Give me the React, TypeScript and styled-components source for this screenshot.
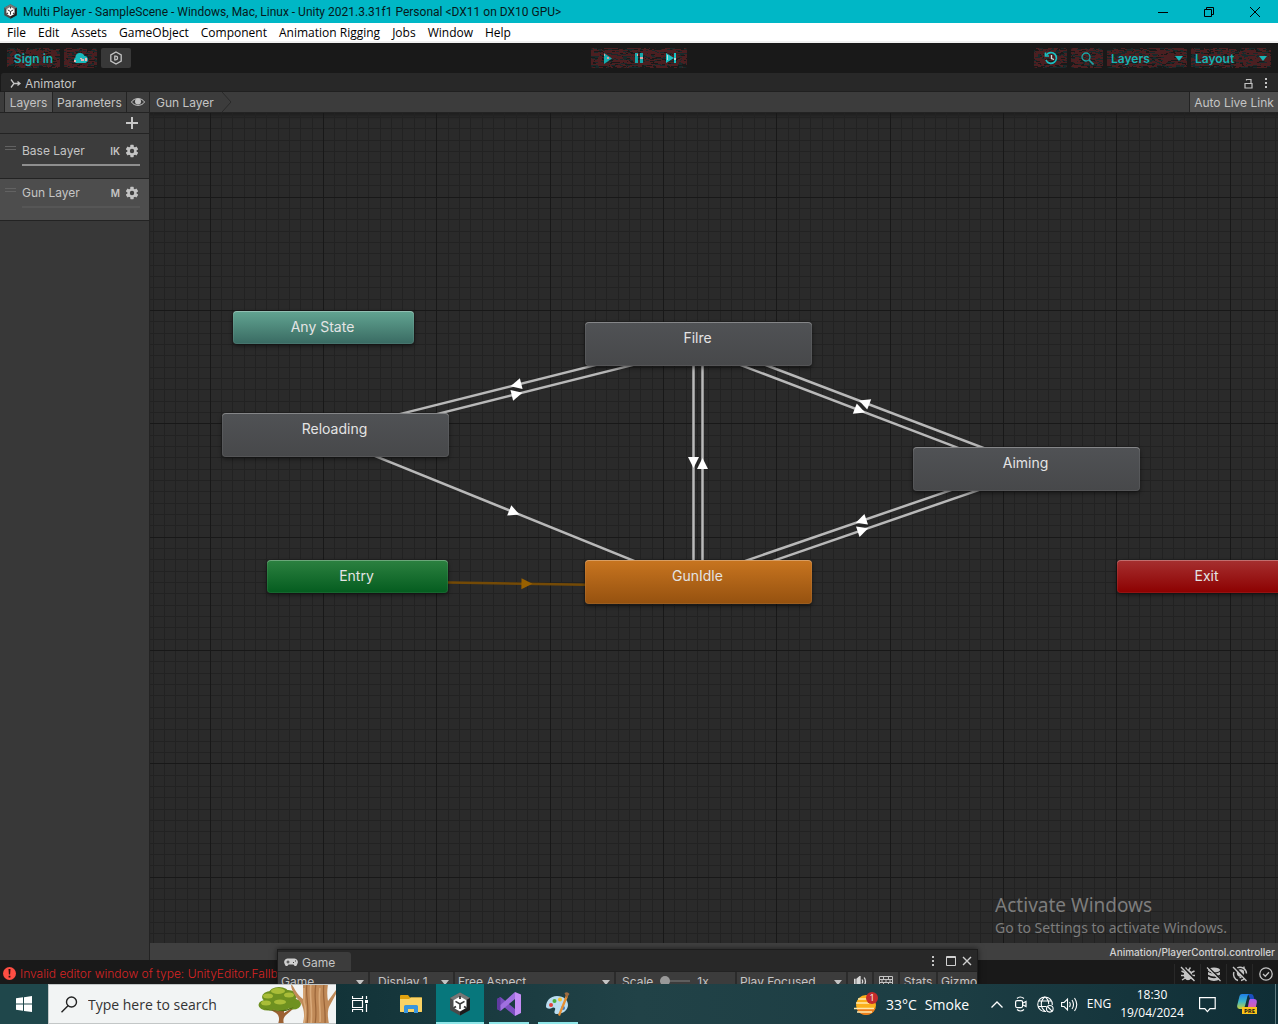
import React from "react";
import styled, { createGlobalStyle, css } from "styled-components";

const UI = `Inter, "Liberation Sans", sans-serif`;
const WIN = `"Open Sans", "Noto Sans", sans-serif`;

const Global = createGlobalStyle`
  * { box-sizing: border-box; }
  body { margin: 0; background: #fff; font-family: ${UI}; font-size: 12px; color: #c4c4c4; }
  button, select, input { font: inherit; color: inherit; margin: 0; }
  button { padding: 0; border: 0; background: none; white-space: nowrap; }
  svg { display: block; flex: none; }
`;

const Desktop = styled.div`
  display: flex;
  flex-direction: column;
  height: calc(100vh - 2px);
  min-height: 600px;
  overflow: hidden;
`;

/* ---------- window chrome ---------- */

const TitleBar = styled.header`
  display: flex;
  align-items: center;
  height: 23px;
  flex: none;
  padding-left: 3px;
  gap: 5px;
  background: #00b7c6;
  color: #06191b;
  font-family: Roboto, ${WIN};
`;

const TitleText = styled.h1`
  flex: 1;
  margin: 0;
  font-size: 12px;
  font-weight: 400;
  white-space: nowrap;
`;

const CaptionButton = styled.button`
  display: grid;
  place-items: center;
  width: 46px;
  height: 20px;
  align-self: flex-start;
`;

const MenuBar = styled.nav`
  display: flex;
  gap: 12px;
  height: 20px;
  flex: none;
  padding: 0 7px;
  background: #fff;
  border-bottom: 2px solid #f0f0f0;
  color: #000;
  font-family: ${WIN};
  line-height: 20px;
`;

const MainToolbar = styled.div`
  display: grid;
  grid-template-columns: 1fr auto 1fr;
  align-items: center;
  height: 30px;
  flex: none;
  padding: 0 7px;
  background: #191919;
`;

const ToolGroup = styled.div<{ $end?: boolean; $tight?: boolean }>`
  display: flex;
  gap: ${(p) => (p.$tight ? 0 : 4)}px;
  justify-content: ${(p) => (p.$end ? "flex-end" : "flex-start")};
`;

const ToolSlot = styled.div<{ $w: number }>`
  position: relative;
  width: ${(p) => p.$w}px;
  height: 20px;
  overflow: hidden;
  border-radius: 2px;
  color: #16b2b4;
`;

const SlotGrain = styled.svg`
  position: absolute;
  inset: 0;
`;

const ToolButton = styled.button`
  position: relative;
  display: grid;
  place-items: center;
  width: 100%;
  height: 100%;
  font-weight: 600;
`;

const PlainToolButton = styled(ToolButton)`
  width: 30px;
  height: 20px;
  border-radius: 2px;
  background: #383838;
`;

const selectReset = css`
  appearance: none;
  border: 0;
  background: none;
  outline: 0;
`;

const ToolSelect = styled.select`
  ${selectReset}
  position: relative;
  width: 100%;
  height: 100%;
  padding: 0 4px;
  font-weight: 600;
`;

const Caret = styled.svg`
  position: absolute;
  right: 4px;
  top: 8px;
  pointer-events: none;
`;

/* ---------- animator panel ---------- */

const Editor = styled.div`
  position: relative;
  display: flex;
  flex-direction: column;
  flex: 1;
  min-height: 0;
  overflow: hidden;
  background: #191919;
`;

const TabStrip = styled.div`
  display: flex;
  align-items: center;
  justify-content: space-between;
  height: 19px;
  flex: none;
  padding: 2px 10px 0 9px;
  background: #282828;
  border-bottom: 1px solid #202020;
  border-left: 1px solid #191919;
  border-top-left-radius: 3px;
`;

const Inline = styled.div<{ $gap: number }>`
  display: flex;
  align-items: center;
  gap: ${(p) => p.$gap}px;
`;

const PanelBar = styled.div`
  display: flex;
  height: 21px;
  flex: none;
  padding-left: 4px;
  background: #3c3c3c;
  border-bottom: 1px solid #232323;
`;

const BarButton = styled.button<{ $on?: boolean; $w: number }>`
  display: grid;
  place-items: center;
  width: ${(p) => p.$w}px;
  border-left: 1px solid #232323;
  background: ${(p) => (p.$on ? "#505050" : "transparent")};
`;

const Crumb = styled.button`
  flex: 1;
  display: flex;
  align-items: center;
  gap: 8px;
  padding-left: 6px;
  border-left: 1px solid #232323;
`;

const Body = styled.div`
  display: flex;
  flex: 1;
  min-height: 0;
`;

const SideBar = styled.aside`
  width: 150px;
  flex: none;
  background: #383838;
  border-right: 1px solid #232323;
`;

const AddRow = styled.div`
  display: flex;
  justify-content: flex-end;
  align-items: center;
  height: 21px;
  padding-right: 11px;
  background: #3c3c3c;
  border-bottom: 1px solid #232323;
`;

const LayerList = styled.ul`
  list-style: none;
  margin: 0;
  padding: 0;
`;

const LayerItem = styled.li<{ $on?: boolean }>`
  display: grid;
  grid-template-columns: 18px 1fr auto 15px;
  align-items: center;
  align-content: start;
  column-gap: 5px;
  height: ${(p) => (p.$on ? 42 : 45)}px;
  padding: ${(p) => (p.$on ? 6 : 9)}px 9px 0 4px;
  background: ${(p) => (p.$on ? "#4d4d4d" : "#3c3c3c")};
  border-bottom: 1px solid #232323;
  line-height: 16px;
`;

const Grip = styled.span`
  width: 11px;
  height: 4px;
  margin: 0 0 7px 1px;
  border: solid #626262;
  border-width: 1px 0;
`;

const Flag = styled.span`
  font-size: 10px;
  font-weight: 600;
`;

const LayerName = styled.span`
  margin-left: -5px;
`;

const Weight = styled.span<{ $full?: boolean }>`
  grid-column: 1 / -1;
  height: 2px;
  margin: 5px 0 0 18px;
  background: ${(p) => (p.$full ? "#8f8f8f" : "#565656")};
`;

const Main = styled.main`
  flex: 1;
  min-width: 0;
  display: flex;
  flex-direction: column;
`;

const Canvas = styled.div`
  position: relative;
  flex: 1;
  overflow: hidden;
  background: #2a2a2a;
  box-shadow: inset 0 5px 4px -3px #1c1c1c;
`;

const Wires = styled.svg`
  position: absolute;
  inset: 0;
  width: 100%;
  height: 100%;
`;

const StateNode = styled.button<{ $x: number; $y: number; $w: number; $h: number; $from: string; $to: string }>`
  position: absolute;
  left: ${(p) => p.$x}px;
  top: ${(p) => p.$y}px;
  width: ${(p) => p.$w}px;
  height: ${(p) => p.$h}px;
  padding: 0 2px ${(p) => (p.$h > 40 ? 13 : 2)}px 0;
  border-radius: 4px;
  background: linear-gradient(${(p) => p.$from}, ${(p) => p.$to});
  box-shadow: inset 0 1px 0 rgba(255, 255, 255, 0.25), inset 0 0 0 1px rgba(255, 255, 255, 0.07), 0 2px 4px rgba(0, 0, 0, 0.5);
  color: #e4e4e4;
  font-size: 14px;
`;

const Watermark = styled.div`
  position: absolute;
  right: 51px;
  bottom: 5px;
  color: #7d7d7d;
  font-family: "Noto Sans", ${WIN};
  font-size: 14px;
  line-height: 20px;
  white-space: nowrap;
  pointer-events: none;
`;

const WatermarkTitle = styled.div`
  font-size: 19px;
  line-height: 26px;
`;

const PathBar = styled.footer`
  height: 17px;
  flex: none;
  padding-right: 3px;
  background: #404040;
  color: #d2d2d2;
  font-size: 10px;
  font-weight: 500;
  line-height: 18px;
  text-align: right;
`;

const StatusBar = styled.div`
  display: flex;
  align-items: center;
  justify-content: space-between;
  height: 24px;
  flex: none;
  padding: 3px 0 0 3px;
  background: #191919;
`;

const ErrorLine = styled.button`
  display: flex;
  align-items: center;
  gap: 4px;
  color: #d62424;
  font-weight: 300;
`;

const StatusIcon = styled.button`
  display: grid;
  place-items: center;
  width: 26px;
  height: 20px;
  border-left: 1px solid #282828;
`;

/* ---------- floating game window ---------- */

const GameWindow = styled.section`
  position: absolute;
  left: 277px;
  bottom: 0;
  width: 701px;
  height: 35px;
  overflow: hidden;
  background: #282828;
  border: solid #1c1c1c;
  border-width: 1px 1px 0;
  box-shadow: 0 0 6px rgba(0, 0, 0, 0.6);
`;

const GameTabs = styled.div`
  display: flex;
  justify-content: space-between;
  height: 21px;
  padding-right: 5px;
`;

const GameTab = styled.div`
  display: flex;
  align-items: center;
  gap: 4px;
  width: 73px;
  margin-top: 2px;
  padding: 2px 0 0 6px;
  background: #3c3c3c;
  border-top-right-radius: 3px;
`;

const GameBar = styled.div`
  display: flex;
  height: 19px;
  background: #3c3c3c;
  border-top: 1px solid #232323;
`;

const GameCell = styled.div<{ $w: number }>`
  position: relative;
  display: flex;
  align-items: center;
  width: ${(p) => p.$w}px;
  flex: none;
  border-right: 2px solid #2b2b2b;
`;

const GameSelect = styled.select<{ $inset?: boolean }>`
  ${selectReset}
  width: 100%;
  height: 18px;
  padding: 0 0 0 ${(p) => (p.$inset ? 8 : 3)}px;
`;

const ScaleLabel = styled.label`
  display: flex;
  align-items: center;
  gap: 7px;
  padding-left: 6px;
`;

const ScaleRange = styled.input`
  appearance: none;
  width: 30px;
  height: 2px;
  background: #5e5e5e;
  &::-webkit-slider-thumb {
    appearance: none;
    width: 10px;
    height: 10px;
    border-radius: 50%;
    background: #999;
  }
`;

const GameButton = styled.button`
  display: grid;
  place-items: center;
  width: 100%;
  height: 18px;
`;

/* ---------- taskbar ---------- */

const TaskBar = styled.footer`
  display: flex;
  height: 40px;
  flex: none;
  background: linear-gradient(90deg, #123338 26%, #214247 50%, #1c3d43 75%, #0f2e36 100%);
  color: #fff;
  font-family: ${WIN};
`;

const StartButton = styled.button`
  display: grid;
  place-items: center;
  width: 48px;
  background: #1f474b;
`;

const SearchBox = styled.label`
  position: relative;
  display: flex;
  align-items: center;
  gap: 10px;
  width: 288px;
  padding-left: 12px;
  overflow: hidden;
  background: #f2f4f4;
  border: solid #c3c7c7;
  border-width: 1px 0 1px 1px;
  color: #333;
`;

const SearchInput = styled.input`
  width: 150px;
  padding: 0;
  border: 0;
  outline: 0;
  background: none;
  font-size: 14px;
  &::placeholder { color: #333; opacity: 1; }
`;

const SearchArt = styled.svg`
  position: absolute;
  right: 0;
  top: -1px;
`;

const TaskIcon = styled.button<{ $active?: boolean; $open?: boolean }>`
  display: grid;
  place-items: center;
  width: 48px;
  background: ${(p) => (p.$active ? "#07777c" : "transparent")};
  background-image: ${(p) => (p.$active || p.$open ? "linear-gradient(#8fe6e8, #8fe6e8)" : "none")};
  background-size: ${(p) => (p.$active ? 48 : 40)}px 2px;
  background-position: center bottom;
  background-repeat: no-repeat;
`;

const TaskList = styled.div`
  display: flex;
  gap: 1px;
  margin-left: 3px;
`;

const Tray = styled.div`
  display: flex;
  align-items: center;
  margin-left: auto;
  padding-right: 2px;
`;

const TrayItem = styled.button<{ $w: number }>`
  display: grid;
  place-items: center;
  width: ${(p) => p.$w}px;
  height: 40px;
  font-size: 12px;
  line-height: 18px;
`;

const Weather = styled.button`
  display: flex;
  align-items: center;
  gap: 8px;
  width: 131px;
  font-size: 14px;
`;

const Divider = styled.span`
  width: 1px;
  height: 40px;
  margin-left: 8px;
  background: #5f7b80;
`;

/* ---------- grain behind toolbar buttons ---------- */

function Grain({ w, seed }: { w: number; seed: number }) {
  let s = seed * 7919 + 17;
  const rnd = () => {
    s = (s * 1103515245 + 12345) % 2147483648;
    return s / 2147483648;
  };
  let red = "";
  let teal = "";
  for (let y = 0; y < 20; y++) {
    let x = 0;
    while (x < w) {
      const run = Math.min(1 + Math.floor(rnd() * 4), w - x);
      const k = rnd();
      const chance = y < 2 || y > 17 ? 0.4 : 0.66;
      if (k < chance) red += `M${x} ${y}h${run}v1h-${run}z`;
      else if (k > 0.8) teal += `M${x} ${y}h${run}v1h-${run}z`;
      x += run;
    }
  }
  return (
    <SlotGrain width={w} height={20} shapeRendering="crispEdges" aria-hidden>
      <path d={red} fill="#4b1f21" />
      <path d={teal} fill="#182a2b" />
    </SlotGrain>
  );
}

function Slot({ w, seed, children }: { w: number; seed: number; children: React.ReactNode }) {
  return (
    <ToolSlot $w={w}>
      <Grain w={w} seed={seed} />
      {children}
    </ToolSlot>
  );
}

const Down = ({ fill = "#c4c4c4" }: { fill?: string }) => (
  <Caret width="8" height="5" viewBox="0 0 8 5">
    <path d="M0 0h8L4 5z" fill={fill} />
  </Caret>
);

/* ---------- icons ---------- */

const UnityIcon = ({ size }: { size: number }) => (
  <svg width={size} height={size} viewBox="0 0 24 24">
    <path d="M12 0.5 22 6v12l-10 5.500L2 18V6z" fill="#4a4a4a" />
    <path d="M12 0.5 22 6l-10 6L2 6z" fill="#777" />
    <path d="M22 6v12l-10 5.500V12z" fill="#1c1c1c" />
    <path d="M12 4.500 18.500 8.200v7.600L12 19.500l-6.500-3.700V8.200z" fill="#fff" />
    <path d="M12 12v5M12 12 7.500 9.400M12 12l4.500-2.600" stroke="#3a3a3a" strokeWidth="1.600" />
    <path d="M12 4v3M5.500 16l2.500-1.500M18.500 16L16 14.500" stroke="#3a3a3a" strokeWidth="1.800" />
  </svg>
);

const Gear = () => (
  <svg width="14" height="14" viewBox="0 0 14 14">
    <g fill="#c4c4c4">
      <circle cx="7" cy="7" r="4.600" />
      {[0, 60, 120].map((a) => (
        <rect key={a} x="5.300" y="0.800" width="3.400" height="12.400" rx="0.600" transform={`rotate(${a} 7 7)`} />
      ))}
    </g>
    <circle cx="7" cy="7" r="2.200" fill="#404040" />
  </svg>
);

const Dots = () => (
  <svg width="4" height="12" viewBox="0 0 4 12" fill="#c4c4c4">
    <path d="M1 1h2v2H1zM1 5h2v2H1zM1 9h2v2H1z" />
  </svg>
);

/* ---------- state graph ---------- */

type NodeDef = { id: string; x: number; y: number; w: number; h: number; from: string; to: string };

const GREY = { from: "#505255", to: "#47484a" };
const nodes: NodeDef[] = [
  { id: "Any State", x: 83, y: 198, w: 181, h: 33, from: "#62a592", to: "#396a62" },
  { id: "Filre", x: 435, y: 209, w: 227, h: 44, ...GREY },
  { id: "Reloading", x: 72, y: 300, w: 227, h: 44, ...GREY },
  { id: "Aiming", x: 763, y: 334, w: 227, h: 44, ...GREY },
  { id: "Entry", x: 117, y: 447, w: 181, h: 33, from: "#2c8140", to: "#045c1f" },
  { id: "GunIdle", x: 435, y: 447, w: 227, h: 44, from: "#c87520", to: "#95510f" },
  { id: "Exit", x: 967, y: 447, w: 181, h: 33, from: "#a63030", to: "#8c0000" },
];

const links: [string, string][] = [
  ["Reloading", "Filre"],
  ["Filre", "Reloading"],
  ["Filre", "GunIdle"],
  ["GunIdle", "Filre"],
  ["Filre", "Aiming"],
  ["Aiming", "Filre"],
  ["Aiming", "GunIdle"],
  ["GunIdle", "Aiming"],
  ["Reloading", "GunIdle"],
  ["Entry", "GunIdle"],
];

const centre = (id: string) => {
  const n = nodes.find((v) => v.id === id)!;
  return [Math.floor(n.x + n.w / 2), n.y + n.h / 2];
};

function Link({ a, b }: { a: string; b: string }) {
  const [x1, y1] = centre(a);
  const [x2, y2] = centre(b);
  const len = Math.hypot(x2 - x1, y2 - y1);
  const angle = (Math.atan2(y2 - y1, x2 - x1) * 180) / Math.PI;
  const entry = a === "Entry";
  return (
    <g transform={`translate(${x1} ${y1}) rotate(${angle})`}>
      <path d={`M0 4.500H${len}`} stroke={entry ? "#744a06" : "#b9b9b9"} strokeWidth="2.500" />
      <path d={`M${len / 2 - 6} -1l11 5.500-11 5.500z`} fill={entry ? "#986000" : "#fff"} />
    </g>
  );
}

const PITCH = 113.35;
function GridLines() {
  let minor = "";
  let major = "";
  for (let i = -6; i < 240; i++) {
    const x = Math.floor(60 + (i * PITCH) / 10) + 0.5;
    const y = Math.floor(84 + ((i - 2) * PITCH) / 10) + 0.5;
    if (i % 10 === 0) major += `M${x} 0V2000`;
    else minor += `M${x} 0V2000`;
    if ((i - 2) % 10 === 0) major += `M0 ${y}H3000`;
    else minor += `M0 ${y}H3000`;
  }
  return (
    <>
      <path d={minor} stroke="#222222" />
      <path d={major} stroke="#181818" />
    </>
  );
}

const menus = ["File", "Edit", "Assets", "GameObject", "Component", "Animation Rigging", "Jobs", "Window", "Help"];

export default function App() {
  return (
    <Desktop>
      <Global />
      <TitleBar>
        <UnityIcon size={15} />
        <TitleText>Multi Player - SampleScene - Windows, Mac, Linux - Unity 2021.3.31f1 Personal &lt;DX11 on DX10 GPU&gt;</TitleText>
        <Inline $gap={0}>
          <CaptionButton aria-label="Minimize">
            <svg width="10" height="10" stroke="#000"><path d="M0 5.500h10" /></svg>
          </CaptionButton>
          <CaptionButton aria-label="Restore">
            <svg width="10" height="10" stroke="#000" fill="none"><path d="M.5 2.500h7v7h-7zM2.500 2.500v-2h7v7h-2" /></svg>
          </CaptionButton>
          <CaptionButton aria-label="Close">
            <svg width="10" height="10" stroke="#000"><path d="M0 0l10 10M10 0L0 10" /></svg>
          </CaptionButton>
        </Inline>
      </TitleBar>
      <MenuBar>
        {menus.map((m) => (
          <button key={m}>{m}</button>
        ))}
      </MenuBar>
      <MainToolbar>
        <ToolGroup>
          <Slot w={53} seed={1}><ToolButton>Sign in</ToolButton></Slot>
          <Slot w={33} seed={2}>
            <ToolButton aria-label="Cloud services">
              <svg width="16" height="12" viewBox="0 0 16 12">
                <path d="M3 11a3 3 0 0 1-.5-5.500A4 4 0 0 1 6 1a5 5 0 0 1 5.500 3A3.600 3.600 0 0 1 12.500 11z" fill="#19b9bb" />
                <path d="M7 6h2v1H7zM8 7h3v2H8zM12 6h2v3h-2zM1 8h2v2H1z" fill="#e6b7b7" />
              </svg>
            </ToolButton>
          </Slot>
          <PlainToolButton aria-label="Package settings">
            <svg width="14" height="14" viewBox="0 0 14 14" fill="none" stroke="#c4c4c4" strokeWidth="1.300">
              <path d="M7 1l5.200 3v6L7 13l-5.200-3V4z" />
              <path d="M5.800 5.200h1a1.800 1.800 0 0 1 0 3.600h-1z" />
            </svg>
          </PlainToolButton>
        </ToolGroup>
        <ToolGroup $tight>
          <Slot w={32} seed={3}>
            <ToolButton aria-label="Play">
              <svg width="9" height="11"><path d="M1 0l8 5.500L1 11z" fill="#16aeb0" /><path d="M1 1h1v2H1zM4 4h2v2H4z" fill="#d9a0a0" /></svg>
            </ToolButton>
          </Slot>
          <Slot w={32} seed={4}>
            <ToolButton aria-label="Pause">
              <svg width="8" height="10"><path d="M0 0h3v10H0zM5 0h3v10H5z" fill="#16a9ab" /><path d="M5 4h3v2H5zM2 1h1v2H2z" fill="#e0a5a5" /></svg>
            </ToolButton>
          </Slot>
          <Slot w={32} seed={5}>
            <ToolButton aria-label="Step">
              <svg width="11" height="10"><path d="M0 0l8 5-8 5zM8 0h2v10H8z" fill="#19c3c5" /><path d="M1 2h1v5H1zM8 5h2v2H8z" fill="#b8dada" /></svg>
            </ToolButton>
          </Slot>
        </ToolGroup>
        <ToolGroup $end>
          <Slot w={33} seed={6}>
            <ToolButton aria-label="Undo history">
              <svg width="14" height="14" viewBox="0 0 14 14" fill="none" stroke="#19c0c2" strokeWidth="1.700">
                <path d="M2.500 4A5.400 5.400 0 1 1 2 9" />
                <path d="M1.500 1.500v3.500h3.500" />
                <path d="M7.500 4v3.500l2.500 1" stroke="#cfe0e0" strokeWidth="1.300" />
              </svg>
            </ToolButton>
          </Slot>
          <Slot w={32} seed={7}>
            <ToolButton aria-label="Search">
              <svg width="13" height="13" viewBox="0 0 13 13" fill="none" stroke="#20a3a4" strokeWidth="1.300">
                <circle cx="5" cy="5" r="4" />
                <path d="M8 8l4.500 4.500" strokeWidth="1.700" />
              </svg>
            </ToolButton>
          </Slot>
          <Slot w={80} seed={8}>
            <ToolSelect aria-label="Layers"><option>Layers</option></ToolSelect>
            <Down fill="#19b4b6" />
          </Slot>
          <Slot w={80} seed={9}>
            <ToolSelect aria-label="Layout"><option>Layout</option></ToolSelect>
            <Down fill="#19b4b6" />
          </Slot>
        </ToolGroup>
      </MainToolbar>

      <Editor>
        <TabStrip>
          <Inline $gap={4}>
            <svg width="11" height="9" viewBox="0 0 11 9" fill="none" stroke="#c4c4c4" strokeWidth="1.300">
              <path d="M1 .5l3 4-3 4M4 4.500h6M7.500 2.500l2.500 2-2.500 2" />
            </svg>
            <span>Animator</span>
          </Inline>
          <Inline $gap={11}>
            <svg width="9" height="11" viewBox="0 0 9 11" fill="none" stroke="#c4c4c4" strokeWidth="1.200">
              <path d="M1 5.500h7v4.500H1zM2.500 2.500V1.500h4.500v4" />
            </svg>
            <Dots />
          </Inline>
        </TabStrip>
        <PanelBar>
          <BarButton $w={48} $on>Layers</BarButton>
          <BarButton $w={74}>Parameters</BarButton>
          <BarButton $w={23} aria-label="Toggle layer panel">
            <svg width="14" height="10" viewBox="0 0 14 10">
              <path d="M0.500 5C3 0.500 11 0.500 13.500 5 11 9.500 3 9.500 0.500 5z" fill="none" stroke="#c4c4c4" />
              <circle cx="7" cy="4.500" r="3" fill="#c4c4c4" />
            </svg>
          </BarButton>
          <Crumb>
            Gun Layer
            <svg width="10" height="20" fill="none" stroke="#282828"><path d="M0 0l9 10-9 10" /></svg>
          </Crumb>
          <BarButton $w={89} $on>Auto Live Link</BarButton>
        </PanelBar>
        <Body>
          <SideBar>
            <AddRow>
              <button aria-label="Add layer">
                <svg width="12" height="12" fill="#c8c8c8"><path d="M5 0h2v12H5zM0 5h12v2H0z" /></svg>
              </button>
            </AddRow>
            <LayerList>
              <LayerItem>
                <Grip />
                <LayerName>Base Layer</LayerName>
                <Flag>IK</Flag>
                <button aria-label="Base Layer settings"><Gear /></button>
                <Weight $full />
              </LayerItem>
              <LayerItem $on>
                <Grip />
                <LayerName>Gun Layer</LayerName>
                <Flag>M</Flag>
                <button aria-label="Gun Layer settings"><Gear /></button>
                <Weight />
              </LayerItem>
            </LayerList>
          </SideBar>
          <Main>
            <Canvas>
              <Wires>
                <GridLines />
                {links.map(([a, b]) => (
                  <Link key={a + b} a={a} b={b} />
                ))}
              </Wires>
              {nodes.map((n) => (
                <StateNode key={n.id} $x={n.x} $y={n.y} $w={n.w} $h={n.h} $from={n.from} $to={n.to}>
                  {n.id}
                </StateNode>
              ))}
              <Watermark>
                <WatermarkTitle>Activate Windows</WatermarkTitle>
                Go to Settings to activate Windows.
              </Watermark>
            </Canvas>
            <PathBar>Animation/PlayerControl.controller</PathBar>
          </Main>
        </Body>
        <StatusBar>
          <ErrorLine>
            <svg width="13" height="13" viewBox="0 0 13 13">
              <circle cx="6.500" cy="6.500" r="6.500" fill="#ff4e43" />
              <path d="M5.500 2h2l-.4 5.500H5.900zM5.600 8.700h1.800v1.800H5.600z" fill="#2a1010" />
            </svg>
            <span>Invalid editor window of type: UnityEditor.Fallb</span>
          </ErrorLine>
          <Inline $gap={0}>
            <StatusIcon aria-label="Debugger">
              <svg width="16" height="16" viewBox="0 0 16 16" stroke="#c4c4c4" strokeWidth="1.400">
                <ellipse cx="8" cy="9" rx="3.500" ry="4.500" fill="#c4c4c4" />
                <path d="M1.500 5l4 2M14.500 5l-4 2M1 9.500h14M2 14l4-2.500M14 14l-4-2.500M5.500 1.500L8 5l2.500-3.500" fill="none" />
                <path d="M2.500 1l13 13" stroke="#191919" strokeWidth="2" />
                <path d="M1 1l13.500 14" />
              </svg>
            </StatusIcon>
            <StatusIcon aria-label="Cache">
              <svg width="16" height="16" viewBox="0 0 16 16">
                <ellipse cx="8" cy="4" rx="6" ry="2.500" fill="#c4c4c4" />
                <path d="M2 6q6 3.500 12 0v2.800q-6 3.400-12 0zM2 10.500q6 3.500 12 0v2.800q-6 3.400-12 0z" fill="#c4c4c4" />
                <path d="M2.500 1.500l13 12.500" stroke="#191919" strokeWidth="1.600" />
                <path d="M1 1.500l13.500 13.500" stroke="#c4c4c4" strokeWidth="1.300" />
              </svg>
            </StatusIcon>
            <StatusIcon aria-label="Lighting">
              <svg width="16" height="16" viewBox="0 0 16 16" fill="none" stroke="#c4c4c4" strokeWidth="1.400">
                <path d="M5 2a6.500 6.500 0 0 1 9.500 5.500M13 12a6.500 6.500 0 0 1-4 2.500M6 14.500A6.500 6.500 0 0 1 2 6M12 .5v4" />
                <circle cx="8.500" cy="7" r="3" fill="#c4c4c4" />
                <path d="M7.500 11.500h2" />
                <path d="M2.500 1l13 13" stroke="#191919" strokeWidth="2" />
                <path d="M1 1l13.500 14" />
              </svg>
            </StatusIcon>
            <StatusIcon aria-label="Progress">
              <svg width="14" height="14" viewBox="0 0 14 14" fill="none" stroke="#c4c4c4" strokeWidth="1.300">
                <circle cx="7" cy="7" r="6.200" />
                <path d="M4 7l2.300 2.200L10 5.200" />
              </svg>
            </StatusIcon>
          </Inline>
        </StatusBar>

        <GameWindow>
          <GameTabs>
            <GameTab>
              <svg width="14" height="9" viewBox="0 0 14 9">
                <path d="M3.500 .5h7a3.500 3.500 0 0 1 3 5c-.8 3-2.500 3.500-4 1h-5c-1.500 2.500-3.200 2-4-1a3.500 3.500 0 0 1 3-5z" fill="#d0d0d0" />
                <path d="M2.500 4h3M4 2.500v3M9 4.500h1M11 3h1" stroke="#3c3c3c" />
              </svg>
              <span>Game</span>
            </GameTab>
            <Inline $gap={11}>
              <Dots />
              <Inline $gap={6}>
                <button aria-label="Maximize">
                  <svg width="10" height="10" fill="none" stroke="#d0d0d0"><path d="M.5 .5h9v9h-9zM0 1.500h10" /></svg>
                </button>
                <button aria-label="Close game view">
                  <svg width="10" height="10" stroke="#d0d0d0" strokeWidth="1.400"><path d="M1 1l8 8M9 1L1 9" /></svg>
                </button>
              </Inline>
            </Inline>
          </GameTabs>
          <GameBar>
            <GameCell $w={92}>
              <GameSelect aria-label="View"><option>Game</option></GameSelect><Down />
            </GameCell>
            <GameCell $w={85}>
              <GameSelect aria-label="Display" $inset><option>Display 1</option></GameSelect><Down />
            </GameCell>
            <GameCell $w={161}>
              <GameSelect aria-label="Aspect"><option>Free Aspect</option></GameSelect><Down />
            </GameCell>
            <GameCell $w={121}>
              <ScaleLabel>
                Scale
                <ScaleRange type="range" min={1} max={5} defaultValue={1} />
                1x
              </ScaleLabel>
            </GameCell>
            <GameCell $w={111}>
              <GameSelect aria-label="Play mode"><option>Play Focused</option></GameSelect><Down />
            </GameCell>
            <GameCell $w={26}>
              <GameButton aria-label="Mute audio">
                <svg width="13" height="11" viewBox="0 0 13 11" fill="none" stroke="#d8d8d8" strokeWidth="1.300">
                  <path d="M0 3.500h1v4H0zM3 3l3-2.500v10L3 8z" fill="#d8d8d8" />
                  <path d="M8 3.500q1.300 2 0 4M10.200 1.500q2.500 4 0 8" />
                </svg>
              </GameButton>
            </GameCell>
            <GameCell $w={26}>
              <GameButton aria-label="Shortcuts">
                <svg width="14" height="11" viewBox="0 0 14 11" fill="none" stroke="#c4c4c4">
                  <path d="M.5 .5h13v10H.5zM0 3.500h14M0 6.500h14M4.500 0v3M9.500 0v3M3 3v3M7 3v3M11 3v3M4.500 7v4M9.500 7v4" />
                </svg>
              </GameButton>
            </GameCell>
            <GameCell $w={38}><GameButton>Stats</GameButton></GameCell>
            <GameCell $w={60}><GameSelect aria-label="Gizmos"><option>Gizmos</option></GameSelect></GameCell>
          </GameBar>
        </GameWindow>
      </Editor>

      <TaskBar>
        <StartButton aria-label="Start">
          <svg width="16" height="16" viewBox="0 0 16 16" fill="#fff">
            <path d="M0 2.300L7 1.300v6.300H0zM8 1.200L16 0v7.600H8zM0 8.500h7v6.300L0 13.800zM8 8.500h8V16l-8-1.100z" />
          </svg>
        </StartButton>
        <SearchBox>
          <svg width="17" height="17" viewBox="0 0 17 17" fill="none" stroke="#222" strokeWidth="1.400">
            <circle cx="10.500" cy="6" r="5" />
            <path d="M7 9.700L.5 16.300" />
          </svg>
          <SearchInput placeholder="Type here to search" aria-label="Type here to search" />
          <SearchArt width="78" height="40" viewBox="0 0 78 40">
            <path d="M20 40c2-5 1-9-2-11l-7-4 1-1 9 3 2-3 3 0 0 5 8-5 1 1-7 6c-3 3-3 6-2 9z" fill="#9c6133" />
            <g fill="#6f9120">
              <ellipse cx="10" cy="21" rx="9.500" ry="5.500" />
              <ellipse cx="22" cy="20" rx="11" ry="7" />
              <ellipse cx="35" cy="20" rx="8" ry="5.500" />
              <ellipse cx="13" cy="13" rx="9" ry="6" />
              <ellipse cx="30" cy="12" rx="9" ry="6" />
              <ellipse cx="21" cy="9" rx="10" ry="6" />
            </g>
            <g fill="#a9bd38">
              <ellipse cx="20" cy="7" rx="7" ry="3" />
              <ellipse cx="10" cy="12" rx="5" ry="2.500" />
              <ellipse cx="31" cy="11" rx="5" ry="2.500" />
              <ellipse cx="8" cy="19" rx="5" ry="2.500" />
              <ellipse cx="22" cy="18" rx="6" ry="2.500" />
            </g>
            <path d="M6 24q12 6 30-1-6 5-14 4-9 1-16-3z" fill="#4d6b14" />
            <path d="M33 0c3 2 4 9 12 15V0h25c-1 7-1 12 0 17l8-11v4l-7 13c-2 6-1 11 0 17H45c2-10 1-15-2-21-5-6-10-12-10-19z" fill="#c08a58" />
            <path d="M49 0c-2 12 3 22 0 40M58 0c-3 14 2 24-1 40M66 0c-2 12 2 22 1 40" fill="none" stroke="#9a6539" strokeWidth="1.200" />
            <path d="M46 4v14c3 8 1 16 0 22M62 4c-2 12 1 22 0 34M53 0c-2 12 2 24 0 40" fill="none" stroke="#d9aa7a" strokeWidth="1.600" />
          </SearchArt>
        </SearchBox>
        <TaskIcon aria-label="Task view">
          <svg width="17" height="16" viewBox="0 0 17 16" fill="none" stroke="#fff">
            <path d="M.5 0v2.500h10V0M.5 4.500h10v7H.5zM.5 16v-2.500h10V16M14.500 0v3M14.500 8v8" strokeWidth="1.200" />
            <path d="M13 4h3v3h-3z" fill="#fff" stroke="none" />
          </svg>
        </TaskIcon>
        <TaskList>
          <TaskIcon aria-label="File Explorer">
            <svg width="22" height="18" viewBox="0 0 22 18">
              <path d="M0 1q0-1 1-1h7l2 2.500h11q1 0 1 1V17H0z" fill="#e0a20e" />
              <path d="M0 4h9l2-1.500h11V16q0 1-1 1H1q-1 0-1-1z" fill="#fbd364" />
              <path d="M4 18v-6.500Q4 10 5.500 10h11q1.500 0 1.500 1.500V18h-4v-4H8v4z" fill="#3a96dd" />
            </svg>
          </TaskIcon>
          <TaskIcon aria-label="Unity Editor" $active><UnityIcon size={24} /></TaskIcon>
          <TaskIcon aria-label="Visual Studio" $open>
            <svg width="24" height="24" viewBox="0 0 24 24">
              <path d="M0 7l3.500-2L18 17v7L4 12.500v0L3.500 19 0 17z" fill="#7c4fc0" />
              <path d="M0 7l3.500-2v14L0 17z" fill="#5f3aa0" />
              <path d="M3.500 19L18 7V0L3.500 13z" fill="#a070e0" />
              <path d="M18 0l6 2.500v18.500L18 24z" fill="#c58cf5" />
            </svg>
          </TaskIcon>
          <TaskIcon aria-label="Paint" $open>
            <svg width="24" height="24" viewBox="0 0 24 24">
              <path d="M11 4c7 0 11 4 11 9s-5 9-11 9c-3 0-3-2-2-4s-1-3-3-2-5 1-6-1C0 9 4 4 11 4z" fill="#b9dcef" />
              <circle cx="5" cy="13" r="2" fill="#e0433c" />
              <circle cx="8.500" cy="9" r="2" fill="#4caf3a" />
              <circle cx="14" cy="7.500" r="2" fill="#f0c030" />
              <circle cx="17" cy="16" r="2" fill="#3e7dc6" />
              <path d="M20 3l2 1.500L14 24l-2-1z" fill="#e58e32" />
              <path d="M18.500 1q3-2 5 1l-3 4z" fill="#9c6b42" />
            </svg>
          </TaskIcon>
        </TaskList>
        <Tray>
          <Weather>
            <svg width="24" height="24" viewBox="0 0 24 24">
              <circle cx="12" cy="13" r="10" fill="#fbb01c" />
              <path d="M2.500 16a10 10 0 0 0 19 0z" fill="#ee7d1a" />
              <path d="M4 7h9M2 11h13M0 16.500h20M3 20h15" stroke="#ffe9ad" strokeWidth="1.700" />
              <circle cx="18" cy="6" r="6" fill="#c42b2b" />
              <text x="18" y="9" textAnchor="middle" fontSize="9" fill="#fff">1</text>
            </svg>
            <span>33°C</span>
            <span>Smoke</span>
          </Weather>
          <TrayItem $w={24} aria-label="Show hidden icons">
            <svg width="12" height="7" fill="none" stroke="#fff" strokeWidth="1.300"><path d="M.5 6.500L6 1l5.500 5.500" /></svg>
          </TrayItem>
          <TrayItem $w={24} aria-label="Meet now">
            <svg width="12" height="16" viewBox="0 0 12 16" fill="none" stroke="#fff" strokeWidth="1.200">
              <rect x=".6" y="4.600" width="7" height="7" rx="1.500" />
              <path d="M8 7l3-1.500v5L8 9M2 2.500Q5 -.5 9 2.500M2 13.500q3.500 3 7 0" />
            </svg>
          </TrayItem>
          <TrayItem $w={24} aria-label="Network">
            <svg width="17" height="17" viewBox="0 0 17 17" fill="none" stroke="#fff" strokeWidth="1.100">
              <path d="M9 15.500A7.300 7.300 0 1 1 15.300 9M8 .8c-5 4-5 10.500 0 14.500M8 .8c2.500 2 3.800 4.500 3.700 7.500M1.500 5h13M1.500 10.500h8" />
              <circle cx="12.800" cy="12.800" r="3.300" />
              <path d="M10.500 10.500l4.600 4.600" />
            </svg>
          </TrayItem>
          <TrayItem $w={24} aria-label="Volume">
            <svg width="17" height="15" viewBox="0 0 17 15" fill="none" stroke="#fff" strokeWidth="1.100">
              <path d="M.6 5.500h2.500L6.500 2v11L3.100 9.500H.6zM8.500 5q1.500 2.500 0 5M11 3q3 4.500 0 9M13.500 1q4.500 6.500 0 13" />
            </svg>
          </TrayItem>
          <TrayItem $w={36}>ENG</TrayItem>
          <TrayItem $w={70}>
            <span>18:30<br />19/04/2024</span>
          </TrayItem>
          <TrayItem $w={40} aria-label="Notifications">
            <svg width="17" height="17" viewBox="0 0 17 17" fill="none" stroke="#fff" strokeWidth="1.200">
              <path d="M.6 1.600h15.600v11H11l-2.600 3-2.600-3H.6z" />
            </svg>
          </TrayItem>
          <TrayItem $w={40} aria-label="Copilot">
            <svg width="20" height="20" viewBox="0 0 20 20">
              <defs>
                <linearGradient id="copA" x1="0" y1="0" x2="0" y2="1">
                  <stop offset="0" stopColor="#1f7fe8" />
                  <stop offset=".5" stopColor="#3cb6c8" />
                  <stop offset="1" stopColor="#c9d23a" />
                </linearGradient>
                <linearGradient id="copB" x1="0" y1="0" x2="0" y2="1">
                  <stop offset="0" stopColor="#a85bf0" />
                  <stop offset="1" stopColor="#f0608c" />
                </linearGradient>
              </defs>
              <path d="M11 0h3q2 0 2.500 2l1 4h-4z" fill="#1a4fc0" />
              <path d="M5 0h8q-2 0-2.500 2L8 12q-1 3-3 3H2.500Q-.5 15 .3 11L2.500 2Q3 0 5 0z" fill="url(#copA)" />
              <path d="M13 5h4q3.500 0 2.700 4L18.500 15q-1 3-4 3H8q2-1 2.500-3L12 7q.3-1.500 1-2z" fill="url(#copB)" />
              <path d="M5 13h15v7H5z" fill="#fcc419" />
              <text x="12.500" y="19" textAnchor="middle" fontSize="6" fontWeight="700" fill="#111">PRE</text>
            </svg>
          </TrayItem>
          <Divider />
        </Tray>
      </TaskBar>
    </Desktop>
  );
}
